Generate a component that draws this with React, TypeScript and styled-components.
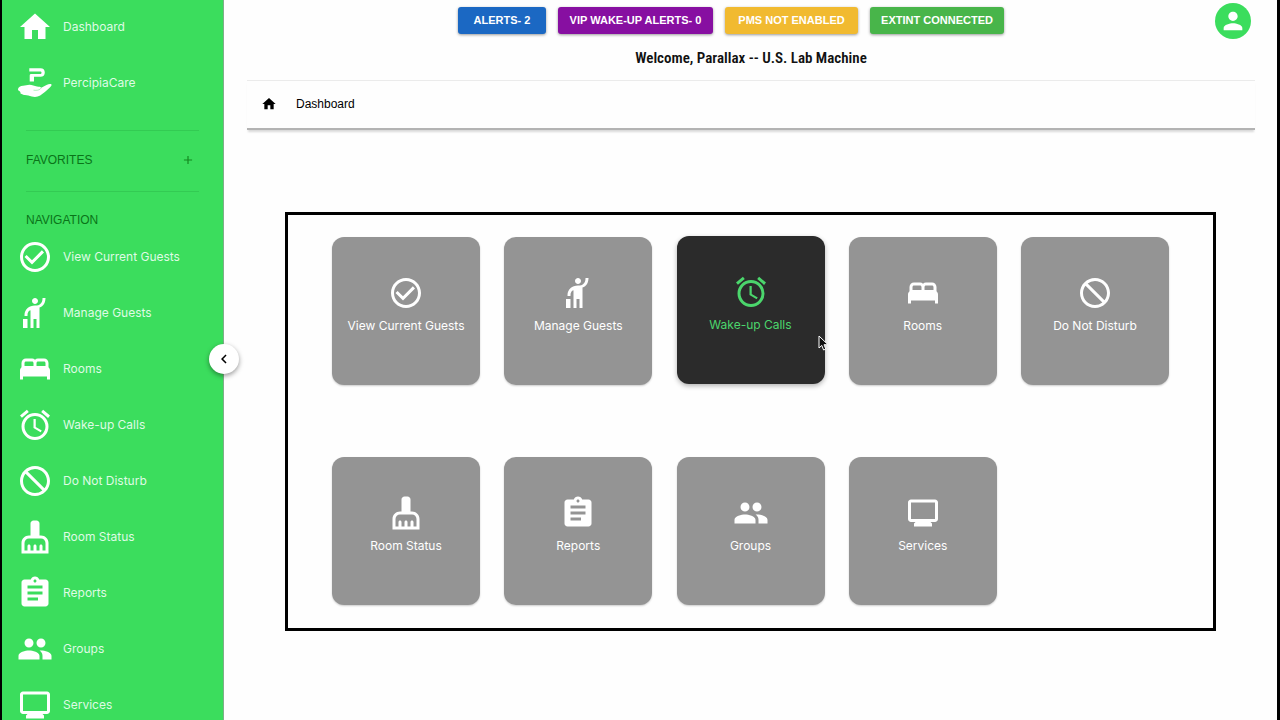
import React from "react";
import styled, { createGlobalStyle } from "styled-components";
import type { IconType } from "react-icons";
import {
  MdAdd,
  MdAlarm,
  MdAssignment,
  MdBed,
  MdCheckCircleOutline,
  MdChevronLeft,
  MdCleaningServices,
  MdGroup,
  MdHail,
  MdHome,
  MdMonitor,
  MdNotInterested,
  MdPerson,
} from "react-icons/md";

const GlobalStyle = createGlobalStyle`
  *, *::before, *::after { box-sizing: border-box; }
  body {
    margin: 0;
    background: #fefefe;
    font-family: Inter, "Liberation Sans", sans-serif;
  }
`;

const Shell = styled.div`
  display: flex;
  height: 100vh;
  overflow: hidden;
  border-left: 2px solid #000;
  border-right: 3px solid #000;
`;

const Sidebar = styled.aside`
  position: relative;
  flex: 0 0 222px;
  background: #3bdd5d;
  border-right: 1px solid #7fae88;
`;

const SidebarScroll = styled.nav`
  height: 100%;
  overflow: hidden;
`;

const NavList = styled.ul`
  list-style: none;
  margin: 0;
  padding: 0;
`;

const NavLink = styled.a`
  display: flex;
  align-items: center;
  gap: 10px;
  height: 56px;
  padding-left: 15px;
  color: #fff;
  font-size: 12px;
  line-height: 20px;
  text-decoration: none;

  span {
    color: #dffbe4;
  }
`;

const SectionRow = styled.div`
  display: flex;
  align-items: center;
  justify-content: space-between;
  height: 62px;
  margin: 0 24px;
  padding-bottom: 2px;
  border-top: 1px solid #33cb53;
  border-bottom: 1px solid #33cb53;
`;

const PrimaryList = styled(NavList)`
  margin: -1px 0 19px;
`;

const SectionTitle = styled.h2`
  margin: 0;
  color: #0a7419;
  font: 400 12px/18px "Liberation Sans", Arial, sans-serif;
`;

const NavigationTitle = styled(SectionTitle)`
  padding: 19px 24px 0;
`;

const AddButton = styled.button`
  display: flex;
  margin: 0 4px 0 0;
  padding: 0;
  border: 0;
  background: none;
  color: #13881f;
  cursor: pointer;
`;

const CollapseButton = styled.button`
  position: absolute;
  top: 344px;
  right: -16px;
  z-index: 1;
  display: flex;
  align-items: center;
  justify-content: center;
  width: 30px;
  height: 30px;
  padding: 0;
  border: 0;
  border-radius: 50%;
  background: #fff;
  color: #000;
  box-shadow: 0 2px 5px rgba(0, 0, 0, 0.4);
  cursor: pointer;
`;

const Main = styled.main`
  position: relative;
  flex: 1;
  min-width: 0;
  padding: 0 22px 0 23px;
`;

const TopBar = styled.header`
  display: flex;
  align-items: center;
  height: 41px;
  padding-right: 4px;
`;

const StatusGroup = styled.div`
  display: flex;
  flex: 1;
  justify-content: center;
  gap: 12px;
`;

const StatusButton = styled.button<{ $color: string; $width: number }>`
  min-width: ${(p) => p.$width}px;
  height: 27px;
  padding: 0 8px;
  border: 0;
  border-radius: 3px;
  background: ${(p) => p.$color};
  color: #fff;
  font: 700 11px/27px "Liberation Sans", Arial, sans-serif;
  white-space: nowrap;
  box-shadow: 0 1px 3px rgba(0, 0, 0, 0.4);
  cursor: pointer;
`;

const Avatar = styled.button`
  display: flex;
  align-items: center;
  justify-content: center;
  width: 36px;
  height: 36px;
  padding: 0;
  border: 0;
  border-radius: 50%;
  background: #3bdd5d;
  color: #fff;
  cursor: pointer;
`;

const Welcome = styled.h1`
  margin: 0;
  height: 39px;
  text-align: center;
  color: #111;
  font: 600 15px/34px "Roboto Condensed", "Liberation Sans Narrow", "Liberation Sans", sans-serif;
`;

const Breadcrumb = styled.nav`
  display: flex;
  align-items: center;
  gap: 19px;
  height: 50px;
  padding: 0 0 2px 14px;
  border-top: 1px solid #ebebeb;
  border-bottom: 2px solid #b3b3b3;
  box-shadow: 0 3px 2px -1px rgba(0, 0, 0, 0.15);
  color: #000;
  font: 400 12px/20px "Liberation Sans", Arial, sans-serif;

  a {
    display: flex;
    color: inherit;
  }
`;

const Board = styled.section`
  display: grid;
  grid-template-columns: repeat(5, 148px);
  justify-content: space-between;
  row-gap: 72px;
  margin: 82px 39px 0 38px;
  padding: 22px 44px 23px 44px;
  border: 3px solid #000;
`;

const Tile = styled.button<{ $active: boolean }>`
  display: flex;
  flex-direction: column;
  align-items: center;
  gap: 5px;
  height: 148px;
  padding: 38px 0 0;
  border: 0;
  border-radius: 12px;
  background: ${(p) => (p.$active ? "#2b2b2b" : "#949494")};
  color: ${(p) => (p.$active ? "#4bd66c" : "#fff")};
  font: 400 12px/20px Inter, "Liberation Sans", sans-serif;
  box-shadow: ${(p) =>
    p.$active ? "0 2px 5px rgba(0, 0, 0, 0.3)" : "0 1px 2px rgba(0, 0, 0, 0.2)"};
  transform: ${(p) => (p.$active ? "translateY(-1px)" : "none")};
  cursor: pointer;
`;

const Pointer = styled.svg`
  position: absolute;
  top: 335px;
  left: 594px;
  pointer-events: none;
`;

function CareIcon({ size = 36 }: { size?: number }) {
  return (
    <svg width={size} height={size} viewBox="0 0 36 36" aria-hidden="true">
      <path
        d="M12.300 3.200H23.500c2.700 0 4.300 1.500 4.300 4.200s-1.600 4.300-4.300 4.300h-6.500v4.800h-4.300V10.600c0-1 .5-1.500 1.500-1.500h8.800c1 0 1.500-.5 1.500-1.400s-.5-1.300-1.500-1.300H12.300Z"
        fill="currentColor"
      />
      <path
        d="M1 24c.3-2 2.500-3.100 5-3.300 2.500-.2 4-.9 6.500-1 2.700 0 4.800 1.300 7.500 1.700 2 .2 3.800.3 4.200 1.400l5.300-2.800c2-1 4.300-1.300 5-.5.6.8-1.100 2.500-3 4.300-3 2.900-5.600 5-8.300 6.700-2.500 1.500-5.500 1.700-8.500 1-2.600-.7-5-1.700-7.800-1.400L3.500 28.600c.2-1.300-.3-1.900-1.200-2.500-.8-.5-1.400-1.200-1.300-2.100Z"
        fill="currentColor"
      />
      <path d="M16.500 25.200c3 .4 6.200.2 7.700-2.200" fill="none" stroke="#3bdd5d" strokeWidth=".4" />
    </svg>
  );
}

interface Entry {
  label: string;
  icon: IconType;
}

const entries: Entry[] = [
  { label: "View Current Guests", icon: MdCheckCircleOutline },
  { label: "Manage Guests", icon: MdHail },
  { label: "Rooms", icon: MdBed },
  { label: "Wake-up Calls", icon: MdAlarm },
  { label: "Do Not Disturb", icon: MdNotInterested },
  { label: "Room Status", icon: MdCleaningServices },
  { label: "Reports", icon: MdAssignment },
  { label: "Groups", icon: MdGroup },
  { label: "Services", icon: MdMonitor },
];

const tileOrder = [0, 1, 3, 2, 4, 5, 6, 7, 8];

const statuses = [
  { label: "ALERTS- 2", color: "#1b68c3", width: 88 },
  { label: "VIP WAKE-UP ALERTS- 0", color: "#870fa1", width: 155 },
  { label: "PMS NOT ENABLED", color: "#f1ba30", width: 133 },
  { label: "EXTINT CONNECTED", color: "#48b54a", width: 134 },
];

export default function App() {
  return (
    <>
      <GlobalStyle />
      <Shell>
        <Sidebar>
          <SidebarScroll aria-label="Main">
            <PrimaryList>
              <li>
                <NavLink href="#dashboard">
                  <MdHome size={36} />
                  <span>Dashboard</span>
                </NavLink>
              </li>
              <li>
                <NavLink href="#percipiacare">
                  <CareIcon />
                  <span>PercipiaCare</span>
                </NavLink>
              </li>
            </PrimaryList>
            <SectionRow>
              <SectionTitle>FAVORITES</SectionTitle>
              <AddButton aria-label="Add favorite">
                <MdAdd size={14} />
              </AddButton>
            </SectionRow>
            <NavigationTitle>NAVIGATION</NavigationTitle>
            <NavList>
              {entries.map(({ label, icon: Icon }) => (
                <li key={label}>
                  <NavLink href="#">
                    <Icon size={36} />
                    <span>{label}</span>
                  </NavLink>
                </li>
              ))}
            </NavList>
          </SidebarScroll>
          <CollapseButton aria-label="Collapse sidebar">
            <MdChevronLeft size={18} />
          </CollapseButton>
        </Sidebar>
        <Main>
          <TopBar>
            <StatusGroup>
              {statuses.map((s) => (
                <StatusButton key={s.label} $color={s.color} $width={s.width}>
                  {s.label}
                </StatusButton>
              ))}
            </StatusGroup>
            <Avatar aria-label="Account">
              <MdPerson size={28} />
            </Avatar>
          </TopBar>
          <Welcome>Welcome, Parallax -- U.S. Lab Machine</Welcome>
          <Breadcrumb aria-label="Breadcrumb">
            <a href="#dashboard" aria-label="Home">
              <MdHome size={16} />
            </a>
            <span>Dashboard</span>
          </Breadcrumb>
          <Board>
            {tileOrder.map((index) => {
              const { label, icon: Icon } = entries[index];
              return (
                <Tile key={label} $active={label === "Wake-up Calls"}>
                  <Icon size={36} />
                  <span>{label}</span>
                </Tile>
              );
            })}
          </Board>
          <Pointer width="12" height="17" viewBox="0 0 12 17" aria-hidden="true">
            <path
              d="M1 1v12l2.800-2.600L5.600 15l2.200-.9L6 9.700h4Z"
              fill="#111"
              stroke="#fff"
              strokeWidth="1"
            />
          </Pointer>
        </Main>
      </Shell>
    </>
  );
}
